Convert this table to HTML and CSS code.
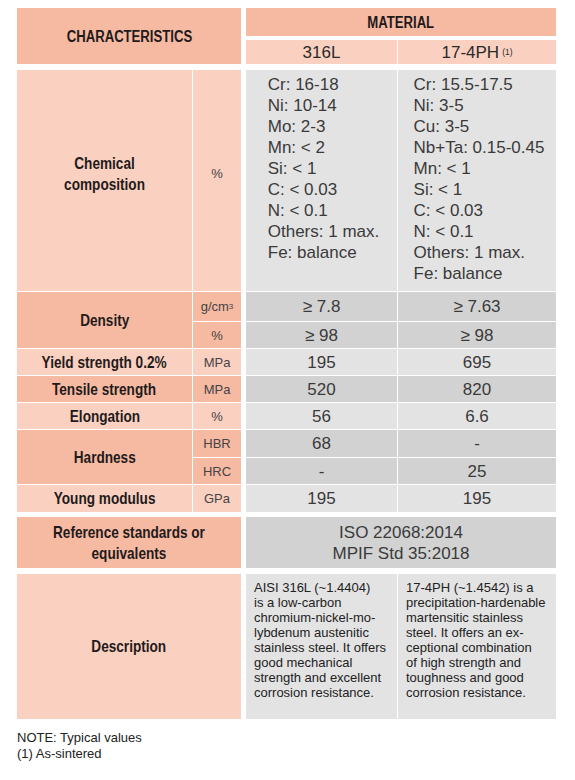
FILE: index.html
```html
<!DOCTYPE html>
<html lang="en">
<head>
    <meta charset="UTF-8">
    <meta name="viewport" content="width=device-width, initial-scale=1.0">
    <title>Material characteristics</title>
    <link rel="stylesheet" href="styles.css">
</head>
<body>
    <div class="sheet">
        <!-- header -->
        <div class="grid head">
            <div class="cell label wide tall dark"><span class="cond">CHARACTERISTICS</span></div>
            <div class="cell label both dark"><span class="cond">MATERIAL</span></div>
            <div class="cell grade a light">316L</div>
            <div class="cell grade b light">17-4PH <sup class="note-ref">(1)</sup></div>
        </div>

        <!-- properties -->
        <div class="grid body">
            <div class="cell label light chem"><span class="cond">Chemical<br>composition</span></div>
            <div class="cell unit light chem">%</div>
            <div class="cell value a grey top">
                <div class="comp">Cr: 16-18<br>Ni: 10-14<br>Mo: 2-3<br>Mn: &lt; 2<br>Si: &lt; 1<br>C: &lt; 0.03<br>N: &lt; 0.1<br>Others: 1 max.<br>Fe: balance</div>
            </div>
            <div class="cell value b grey top">
                <div class="comp">Cr: 15.5-17.5<br>Ni: 3-5<br>Cu: 3-5<br>Nb+Ta: 0.15-0.45<br>Mn: &lt; 1<br>Si: &lt; 1<br>C: &lt; 0.03<br>N: &lt; 0.1<br>Others: 1 max.<br>Fe: balance</div>
            </div>

            <div class="cell label tall dark"><span class="cond">Density</span></div>
            <div class="cell unit dark">g/cm<sup class="exp">3</sup></div>
            <div class="cell value a grey-dark">≥ 7.8</div>
            <div class="cell value b grey-dark">≥ 7.63</div>
            <div class="cell unit dark">%</div>
            <div class="cell value a grey-dark">≥ 98</div>
            <div class="cell value b grey-dark">≥ 98</div>

            <div class="cell label light"><span class="cond">Yield strength 0.2%</span></div>
            <div class="cell unit light">MPa</div>
            <div class="cell value a grey">195</div>
            <div class="cell value b grey">695</div>

            <div class="cell label dark"><span class="cond">Tensile strength</span></div>
            <div class="cell unit dark">MPa</div>
            <div class="cell value a grey-dark">520</div>
            <div class="cell value b grey-dark">820</div>

            <div class="cell label light"><span class="cond">Elongation</span></div>
            <div class="cell unit light">%</div>
            <div class="cell value a grey">56</div>
            <div class="cell value b grey">6.6</div>

            <div class="cell label tall dark"><span class="cond">Hardness</span></div>
            <div class="cell unit dark">HBR</div>
            <div class="cell value a grey-dark">68</div>
            <div class="cell value b grey-dark">-</div>
            <div class="cell unit dark">HRC</div>
            <div class="cell value a grey-dark">-</div>
            <div class="cell value b grey-dark">25</div>

            <div class="cell label light"><span class="cond">Young modulus</span></div>
            <div class="cell unit light">GPa</div>
            <div class="cell value a grey">195</div>
            <div class="cell value b grey">195</div>
        </div>

        <div class="grid ref">
            <div class="cell label wide dark"><span class="cond">Reference standards or<br>equivalents</span></div>
            <div class="cell value both grey-dark">ISO 22068:2014<br>MPIF Std 35:2018</div>
        </div>

        <div class="grid desc">
            <div class="cell label wide light"><span class="cond">Description</span></div>
            <div class="cell text a grey">AISI 316L (~1.4404)<br>is a low-carbon<br>chromium-nickel-mo-<br>lybdenum austenitic<br>stainless steel. It offers<br>good mechanical<br>strength and excellent<br>corrosion resistance.</div>
            <div class="cell text b grey">17-4PH (~1.4542) is a<br>precipitation-hardenable<br>martensitic stainless<br>steel. It offers an ex-<br>ceptional combination<br>of high strength and<br>toughness and good<br>corrosion resistance.</div>
        </div>

        <div class="notes">
            NOTE: Typical values<br>
            (1) As-sintered
        </div>
    </div>
</body>
</html>
```

FILE: styles.css
```css
body {
    margin: 0;
    padding: 8px 17px;
    background: #fff;
    font-family: "Liberation Sans", Arial, sans-serif;
    color: #333;
}

.sheet {
    width: 539px;
    display: flex;
    flex-direction: column;
}

.grid {
    display: grid;
    grid-template-columns: 175px 48px 3px 151px 158px;
    gap: 1px;
}

.head {
    row-gap: 4px;
    grid-template-rows: 28px 24px;
}

.body {
    margin-top: 6px;
    grid-template-rows: 221px 29px 26px 26px 26px 26px 27px 26px 27px;
}

.ref {
    margin-top: 5px;
    grid-template-rows: 51px;
}

.desc {
    margin-top: 6px;
    grid-template-rows: 145px;
}

.cell {
    display: flex;
    align-items: center;
    justify-content: center;
    text-align: center;
}

.label {
    grid-column: 1;
    font-family: "Liberation Sans", Arial, sans-serif;
    font-weight: bold;
    font-size: 17px;
    line-height: 21px;
    color: #1f1b1b;
}

/* no condensed face installed: squeeze the bold sans */
.cond {
    display: inline-block;
    white-space: nowrap;
    transform: scaleX(0.8);
}

.label.wide { grid-column: 1 / 3; }
.head .label { font-size: 16px; }
.head .cond { transform: scaleX(0.82); }

.unit {
    grid-column: 2;
    font-size: 13px;
    color: #444;
}

.a { grid-column: 4; }
.b { grid-column: 5; }
.both { grid-column: 4 / 6; }
.tall { grid-row: span 2; }

.value, .grade {
    font-size: 17px;
    line-height: 21px;
    color: #3a3a3a;
}

.grade { color: #2a2a2a; }

.top {
    align-items: flex-start;
    padding-top: 4px;
}

.chem { padding-bottom: 14px; }

.comp {
    text-align: left;
    margin-left: 4px;
}

.text {
    align-items: flex-start;
    justify-content: flex-start;
    text-align: left;
    padding: 6px 8px;
    font-size: 13px;
    line-height: 15px;
    color: #222;
}

.note-ref {
    font-size: 8.5px;
    vertical-align: 6px;
    margin-left: 3px;
}

.exp {
    font-size: 8px;
    vertical-align: 5px;
}

.dark { background: #f6b9a2; }
.light { background: #fad0c0; }
.grey { background: #e3e3e3; }
.grey-dark { background: #d2d2d2; }

.notes {
    margin-top: 11px;
    font-size: 13px;
    line-height: 16px;
    color: #222;
}
```
